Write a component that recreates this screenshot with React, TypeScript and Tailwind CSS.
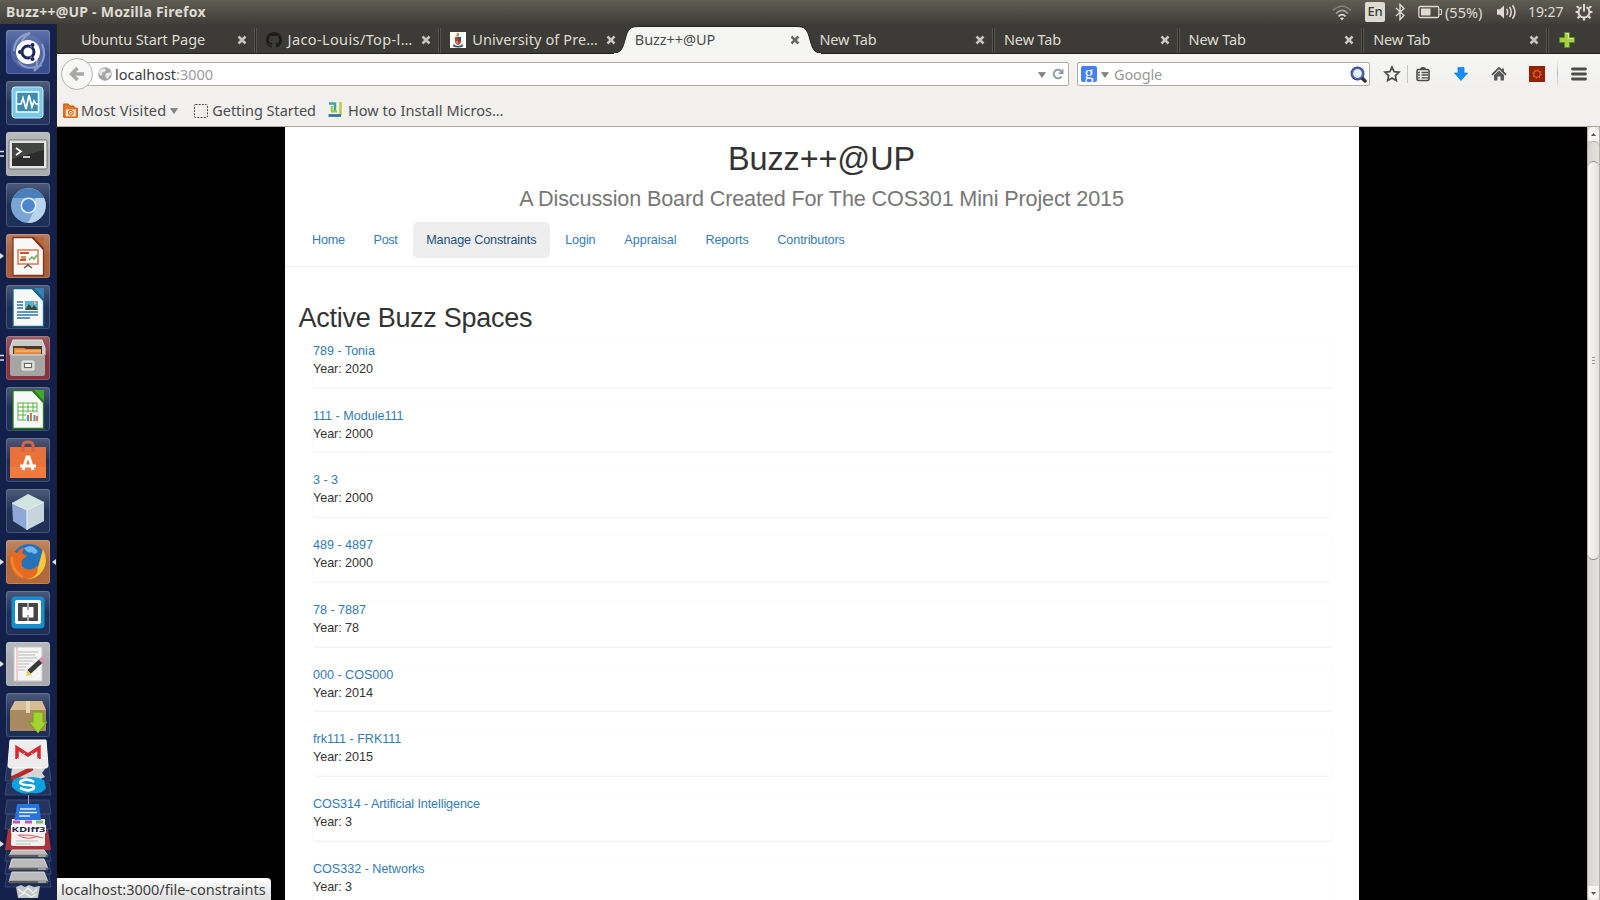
import type { ReactNode } from 'react';

const spaces = [
  ['789 - Tonia', '2020'],
  ['111 - Module111', '2000'],
  ['3 - 3', '2000'],
  ['489 - 4897', '2000'],
  ['78 - 7887', '78'],
  ['000 - COS000', '2014'],
  ['frk111 - FRK111', '2015'],
  ['COS314 - Artificial Intelligence', '3'],
  ['COS332 - Networks', '3'],
];

function Svg({ w, h, className = '', children }: { w: number; h: number; className?: string; children: ReactNode }) {
  return (
    <svg width={w} height={h} viewBox={`0 0 ${w} ${h}`} className={`block shrink-0 ${className}`} fill="none">
      {children}
    </svg>
  );
}

function TitleBar() {
  return (
    <header className="flex h-6 shrink-0 items-center bg-linear-to-b from-[#5f5c52] to-[#3f3e39] pl-1.5 text-[#dfdbd2]">
      <span className="text-[14px] leading-6 font-bold tracking-[0.24px]">Buzz++@UP - Mozilla Firefox</span>
      <div className="ml-auto flex items-center">
        <Svg w={20} h={20} className="mr-[13px]">
          <path d="M1 8.500Q10 0 19 8.500" stroke="#85827b" strokeWidth="1.600" />
          <path d="M4 11.500Q10 5.500 16 11.500" stroke="#a5a29a" strokeWidth="1.700" />
          <path d="M6.500 14.300Q10 11 13.500 14.300" stroke="#dfdbd2" strokeWidth="1.700" />
          <path d="M8 16.200L10 18.600L12 16.200Q10 14.800 8 16.200Z" fill="#dfdbd2" />
        </Svg>
        <span className="flex h-5 w-5 items-center justify-center rounded-[2px] bg-[#dfdbd2] text-[13px] font-medium tracking-[-0.3px] text-[#3c3b37]">En</span>
        <Svg w={12} h={18} className="ml-[9px]">
          <path d="M2 5L10 12.500L6 16.500V1.500L10 5.500L2 13" stroke="#dfdbd2" strokeWidth="1.400" />
        </Svg>
        <Svg w={25} h={14} className="ml-[12px]">
          <rect x=".8" y="1.500" width="20" height="11" rx="1.500" stroke="#dfdbd2" strokeWidth="1.300" />
          <rect x="3" y="3.500" width="9.500" height="7" fill="#dfdbd2" />
          <path d="M21.500 4.500H23.500V9.500H21.500" stroke="#dfdbd2" />
        </Svg>
        <span className="ml-[2px] w-[40px] pb-[1px] text-[14.5px] leading-5 whitespace-nowrap">(55%)</span>
        <Svg w={22} h={18} className="ml-[11px]">
          <path d="M1 6.200H4L8 2.500V15.500L4 11.800H1Z" fill="#dfdbd2" />
          <path d="M10.500 6Q13 9 10.500 12M13.500 4Q17 9 13.500 14M16.500 2.200Q21.500 9 16.500 15.800" stroke="#dfdbd2" strokeWidth="1.500" />
        </Svg>
        <span className="ml-[10px] w-[36px] pb-[1px] text-[14px] leading-5 tracking-[-0.1px]">19:27</span>
        <Svg w={18} h={18} className="mr-[7px] ml-[11px]">
          <path d="M6.500 4.200A5.500 5.500 0 1 0 11.500 4.200" stroke="#dfdbd2" strokeWidth="2" />
          <path d="M9 1V8.500" stroke="#dfdbd2" strokeWidth="2" />
          <path d="M3.800 5L1.800 3.200M14.200 5L16.200 3.200M3.400 9H.6M14.600 9H17.400M4.600 13.200L2.600 15.200M13.400 13.200L15.400 15.200M9 15V17.600" stroke="#dfdbd2" strokeWidth="2.200" />
        </Svg>
      </div>
    </header>
  );
}

function Crest() {
  return (
    <Svg w={16} h={16} className="bg-white">
      <path d="M5 5H11V9Q11 12 8 13Q5 12 5 9Z" fill="#b4432f" />
      <path d="M8 5H11V9H8Z" fill="#3c4d86" />
      <path d="M6 9H8V12.500Q6 11.500 6 9Z" fill="#d5a02c" />
      <path d="M7 1H9V4.500H6Z" fill="#b79a45" />
      <path d="M3 13.500Q8 16 13 13.500" stroke="#2d477e" strokeWidth="1.500" />
      <path d="M4.500 12L3 14M11.500 12L13 14" stroke="#6c8c4e" />
    </Svg>
  );
}

function GitHub() {
  return (
    <svg width="16" height="16" viewBox="0 0 16 16" fill="#1d1c1a" className="block shrink-0">
      <path d="M8 0C3.58 0 0 3.58 0 8c0 3.54 2.29 6.53 5.47 7.59.4.07.55-.17.55-.38 0-.19-.01-.82-.01-1.49-2.01.37-2.53-.49-2.69-.94-.09-.23-.48-.94-.82-1.13-.28-.15-.68-.52-.01-.53.63-.01 1.08.58 1.23.82.72 1.21 1.87.87 2.33.66.07-.52.28-.87.51-1.07-1.78-.2-3.64-.89-3.64-3.95 0-.87.31-1.59.82-2.15-.08-.2-.36-1.02.08-2.12 0 0 .67-.21 2.2.82.64-.18 1.32-.27 2-.27s1.36.09 2 .27c1.53-1.04 2.2-.82 2.2-.82.44 1.1.16 1.92.08 2.12.51.56.82 1.27.82 2.15 0 3.07-1.87 3.75-3.65 3.95.29.25.54.73.54 1.48 0 1.07-.01 1.93-.01 2.2 0 .21.15.46.55.38A8.01 8.01 0 0 0 16 8c0-4.42-3.58-8-8-8z" />
    </svg>
  );
}

function Tab({ title, icon, active = false, last = false, tracking = 'tracking-[-0.05px]' }: { title: string; icon?: ReactNode; active?: boolean; last?: boolean; tracking?: string }) {
  return (
    <div className="relative flex w-[184.6px] shrink-0 items-center pt-[2px] pr-[10px] pl-[9px]">
      {active && (
        <svg width="213" height="29" viewBox="0 0 213 29" className="absolute top-px left-[-14px]">
          <path d="M0 28.500C10 28.500 11 22 13.500 13C16 4 18 1.500 27 1.500H184C193 1.500 195 4 197.500 13C200 22 201 28.500 211 28.500Z" fill="#f5f5f4" stroke="#22211f" strokeWidth="1" />
          <path d="M2 28.700H209" stroke="#f5f5f4" strokeWidth="1.500" />
        </svg>
      )}
      {icon}
      <span className={`relative text-[14.5px] whitespace-nowrap ${icon ? 'ml-[6px]' : ''} ${tracking} ${active ? 'text-[#4c4c4c]' : 'text-[#dfdbd2]'}`}>{title}</span>
      <Svg w={10} h={10} className="relative ml-auto">
        <path d="M1.500 1.500L8.500 8.500M8.500 1.500L1.500 8.500" stroke={active ? '#6a6864' : '#c9c5bd'} strokeWidth="2.500" />
      </Svg>
      {!active && !last && <span className="absolute top-1 right-0 h-[25px] w-[3px] border-x border-[#55534e] bg-[#2c2b28]" />}
    </div>
  );
}

function TabStrip() {
  return (
    <div className="flex h-[30px] shrink-0 border-b border-[#22211f] bg-[#3c3b37] pl-[15px]">
      <Tab title="Ubuntu Start Page" tracking="tracking-[-0.1px]" />
      <Tab title="Jaco-Louis/Top-l…" icon={<GitHub />} tracking="tracking-[0.38px]" />
      <Tab title="University of Pre…" icon={<Crest />} last tracking="tracking-[0.12px]" />
      <Tab title="Buzz++@UP" active />
      <Tab title="New Tab" tracking="tracking-[-0.12px]" />
      <Tab title="New Tab" tracking="tracking-[-0.12px]" />
      <Tab title="New Tab" tracking="tracking-[-0.12px]" />
      <Tab title="New Tab" tracking="tracking-[-0.12px]" />
      <Svg w={18} h={18} className="mt-[7px] ml-[9px]">
        <path d="M6.500 1.500H11.500V6.500H16.500V11.500H11.500V16.500H6.500V11.500H1.500V6.500H6.500Z" fill="#a9cf46" stroke="#5d8a1c" />
        <path d="M7.500 2.500H10.500V7.500H15.500" stroke="#d8ec94" />
      </Svg>
    </div>
  );
}

function Caret() {
  return (
    <Svg w={8} h={6}>
      <path d="M.5 .5H7.500L4 5.500Z" fill="#858585" stroke="#6f6f6f" strokeWidth=".6" />
    </Svg>
  );
}

function NavBar() {
  return (
    <div className="flex h-10 shrink-0 items-center pl-1">
      <div className="relative z-10 flex h-8 w-8 shrink-0 items-center justify-center rounded-full border border-[#b3b7ba] bg-[#f7f7f6]">
        <Svg w={16} h={16}>
          <path d="M8.500 2L2.500 8L8.500 14M3 8H15" stroke="#a9a8a6" strokeWidth="3.400" />
        </Svg>
      </div>
      <div className="-ml-2 flex h-6 w-[984px] shrink-0 items-center rounded-[2px] border border-[#b1ada6] bg-white pr-[4px] pl-[12px] text-[14.5px]">
        <Svg w={14} h={14}>
          <circle cx="7" cy="7" r="6.800" fill="#a6a6a6" />
          <path d="M2 3Q4 1 7 1.500L8 3.500L6 5L4 5.500L4.500 8L2.500 8.500L.8 6ZM8.500 6L12.500 5.500L13.300 7.500L11 9.500L10 12L8 10.500L7 8Z" fill="#e9e9e9" />
        </Svg>
        <span className="ml-[3px] pt-[1px] tracking-[-0.02px] text-[#3c3c3c]">localhost<span className="text-[#9b9b9b]">:3000</span></span>
        <div className="mr-[6px] ml-auto pt-[2px]"><Caret /></div>
        <Svg w={12} h={12}>
          <path d="M9.500 8.500A4.300 4.300 0 1 1 8.500 2.500L9.500 3.500" stroke="#8d99a3" strokeWidth="2" />
          <path d="M11.500 .5V6H6Z" fill="#8d99a3" />
        </Svg>
      </div>
      <div className="ml-2 flex h-6 w-[293px] shrink-0 items-center rounded-[2px] border border-[#b1ada6] bg-white pr-[2px] pl-[3px] text-[14.5px]">
        <span className="flex h-4 w-4 items-center justify-center rounded-[2px] bg-[#4580f5] pb-[3px] font-['Liberation_Serif',serif] text-[18px] leading-none text-white">g</span>
        <div className="ml-1 pt-[2px]"><Caret /></div>
        <span className="ml-[5px] pt-[1px] tracking-[-0.15px] text-[#999]">Google</span>
        <Svg w={17} h={17} className="ml-auto">
          <path d="M11 11L15 15" stroke="#333" strokeWidth="3.500" strokeLinecap="round" />
          <circle cx="7.500" cy="7.500" r="5.700" fill="#e5edf9" stroke="#2b3e8c" strokeWidth="2.500" />
          <circle cx="7.500" cy="7.500" r="5.500" stroke="#8195d3" strokeWidth=".7" />
        </Svg>
      </div>
      <Svg w={18} h={18} className="ml-[13px]">
        <path d="M9 2L11.100 6.600L16 7.200L12.400 10.600L13.300 15.600L9 13.100L4.700 15.600L5.600 10.600L2 7.200L6.900 6.600Z" stroke="#4c4c4c" strokeWidth="1.700" />
      </Svg>
      <span className="ml-[6px] h-[18px] w-px bg-[#c4c8cc]" />
      <Svg w={16} h={16} className="ml-[7px]">
        <rect x="2" y="3.500" width="12" height="11" rx="1.500" stroke="#4c4c4c" strokeWidth="1.600" />
        <path d="M5 3.500Q5 1 8 1Q11 1 11 3.500Z" fill="#4c4c4c" />
        <path d="M3 6.500H5M6.500 6.500H13M3 9H5M6.500 9H13M3 11.800H5M6.500 11.800H13" stroke="#4c4c4c" strokeWidth="1.300" />
      </Svg>
      <Svg w={16} h={16} className="ml-[22px]">
        <path d="M5 1.500H11V7H14.500L8 14.500L1.500 7H5Z" fill="#168ffb" stroke="#0a7be0" strokeWidth=".7" />
      </Svg>
      <Svg w={16} h={16} className="ml-[22px]">
        <path d="M1 8.800L8 2L15 8.800" stroke="#4c4c4c" strokeWidth="1.700" />
        <path d="M3 9L8 4.500L13 9V14.500H9.500V10.500H6.500V14.500H3Z" fill="#5b5b5b" />
        <path d="M12 2.500V6" stroke="#4c4c4c" strokeWidth="1.700" />
      </Svg>
      <Svg w={16} h={16} className="ml-[22px]">
        <rect width="16" height="16" fill="#952100" />
        <circle cx="8" cy="8" r="3.200" stroke="#d4701a" strokeWidth="1.100" />
        <circle cx="8" cy="8" r="4.300" stroke="#d4701a" strokeWidth="1.200" strokeDasharray="1 2.380" />
      </Svg>
      <span className="ml-[12px] h-8 w-px bg-linear-to-b from-transparent via-[#b5bcc4] to-transparent" />
      <Svg w={16} h={14} className="ml-[13px]">
        <path d="M1.500 2H14.500M1.500 7H14.500M1.500 12H14.500" stroke="#4c4c4c" strokeWidth="2.800" strokeLinecap="round" />
      </Svg>
    </div>
  );
}

function BookmarksBar() {
  return (
    <div className="flex h-[33px] shrink-0 items-center border-b border-[#aca79f] pt-[1px] pl-[6px] text-[14.5px] whitespace-nowrap text-[#4c4c4c]">
      <Svg w={15} h={15}>
        <path d="M.7 14.300V1H5.500L7 3H11V5H14.300V14.300Z" fill="#e07b2a" stroke="#c8590f" />
        <rect x="2.800" y="6.500" width="10" height="6.800" fill="#f7dcc4" />
        <circle cx="7.800" cy="9.800" r="2.400" stroke="#c8590f" />
        <circle cx="7.800" cy="9.800" r=".8" fill="#c8590f" />
      </Svg>
      <span className="mr-[4px] ml-[3px] tracking-[0.16px]">Most Visited</span>
      <Caret />
      <Svg w={14} h={14} className="ml-[16px]">
        <rect x=".5" y=".5" width="13" height="13" rx="1" stroke="#4c4c4c" strokeDasharray="2 1.200" />
      </Svg>
      <span className="ml-[4px] tracking-[-0.04px]">Getting Started</span>
      <Svg w={14} h={15} className="-mt-[2px] ml-[12px]">
        <path d="M1 1.500H7V10" stroke="#3ea6a4" strokeWidth="2.500" />
        <path d="M12.500 0V13" stroke="#b9cf31" strokeWidth="2.500" />
        <path d="M3.800 4V9.500H9" stroke="#9dc63a" strokeWidth="2" />
        <path d="M.5 13.500H13" stroke="#3475a5" strokeWidth="2.800" />
      </Svg>
      <span className="ml-[6px] tracking-[0.06px]">How to Install Micros…</span>
    </div>
  );
}

const navLink = 'rounded-[5px] px-[13.5px] py-[9px]';

function Page() {
  return (
    <main className="h-full w-[1074px] shrink-0 overflow-hidden bg-white font-['Liberation_Sans',Arial,sans-serif] text-[12.6px] leading-[18px] text-[#333]">
      <div className="h-[140px] border-b border-[#eee] pt-[14px]">
        <h1 className="pr-[1px] text-center text-[32.4px] leading-[36px] tracking-[-0.08px]">Buzz++@UP</h1>
        <p className="mt-[8px] pr-[1px] text-center text-[21.6px] leading-[28px] tracking-[-0.14px] text-[#777]">A Discussion Board Created For The COS301 Mini Project 2015</p>
        <nav className="mt-[9px] flex gap-[1.8px] pl-[13.5px] text-[#337ab7]">
          <a className={`${navLink} tracking-[-0.2px]`}>Home</a>
          <a className={`${navLink} tracking-[-0.35px]`}>Post</a>
          <a className={`${navLink} bg-[#eee] tracking-[-0.14px] text-[#23527c]`}>Manage Constraints</a>
          <a className={`${navLink} tracking-[-0.1px]`}>Login</a>
          <a className={`${navLink} tracking-[-0.02px]`}>Appraisal</a>
          <a className={`${navLink} tracking-[-0.14px]`}>Reports</a>
          <a className={`${navLink} tracking-[-0.1px]`}>Contributors</a>
        </nav>
      </div>
      <h2 className="mt-[36px] pl-[13.5px] text-[27px] leading-[30px] tracking-[-0.27px]">Active Buzz Spaces</h2>
      <ul className="mt-[8.100px] flex flex-col gap-[18px] px-[26.5px]">
        {spaces.map(([name, year]) => (
          <li key={name} className="h-[46.700px] shrink-0 rounded-[4px] border border-[#fcfcfc] pl-[0.5px] shadow-[0_1px_1px_rgba(0,0,0,0.05)]">
            <a className={`block text-[#337ab7] ${name.length > 20 ? 'tracking-[-0.1px]' : 'tracking-[-0.02px]'}`}>{name}</a>
            <p className="tracking-[-0.06px]">Year: {year}</p>
          </li>
        ))}
      </ul>
    </main>
  );
}

function ScrollBar() {
  return (
    <div className="flex w-[13px] shrink-0 flex-col border-x border-[#b5b1ab] bg-linear-to-r from-[#d8d6d3] to-[#e4e2df]">
      <div className="flex h-[14px] items-center justify-center rounded-t-[6px] bg-[#f7f6f5]">
        <Svg w={5} h={3}><path d="M0 3H5L2.500 0Z" fill="#555" /></Svg>
      </div>
      <div className="h-[20px] shrink-0 rounded-t-[6px] border-t border-[#b5b1ab]" />
      <div className="flex h-[399px] flex-col items-center justify-center gap-[2px] rounded-[6px] border-y border-[#8c8881] bg-linear-to-r from-[#fbfaf9] to-[#e2e0dd]">
        <span className="h-px w-[3px] bg-[#999]" />
        <span className="h-px w-[3px] bg-[#999]" />
        <span className="h-px w-[3px] bg-[#999]" />
      </div>
      <div className="mt-auto flex h-[14px] items-center justify-center rounded-b-[6px] bg-[#f7f6f5]">
        <Svg w={5} h={3}><path d="M0 0H5L2.500 3Z" fill="#555" /></Svg>
      </div>
    </div>
  );
}

function Doc({ color, dark, children }: { color: string; dark: string; children: ReactNode }) {
  return (
    <>
      <path d="M7 3.500H27L37.500 14V41.500H7Z" fill="#f8f8f8" stroke={dark} strokeWidth="1.300" />
      <path d="M25 3H38V17Z" fill={color} />
      <path d="M25 3L38 17V14L28 3Z" fill={dark} />
      {children}
    </>
  );
}

const launcherItems: { bg: string; mark?: 'one' | 'two' | 'focus'; art: ReactNode }[] = [
  {
    bg: 'bg-[#3a4f92]',
    art: (
      <>
        <circle cx="22" cy="22" r="17" fill="#7084b8" opacity=".45" />
        <path d="M8 21Q9 6 24 3Q13 9 15 22M36 14Q43 30 28 41Q34 31 29 25M12 31Q20 42 36 35" stroke="#a6b4d6" strokeWidth="2" opacity=".7" />
        <circle cx="22" cy="22" r="12" fill="#fff" />
        <circle cx="22" cy="22" r="6" stroke="#19275e" strokeWidth="3" />
        <path d="M16 22H10M25 17L28 12M25 27L28 32" stroke="#fff" strokeWidth="2" />
        <circle cx="14" cy="22" r="2" fill="#19275e" /><circle cx="26.500" cy="15" r="2" fill="#19275e" /><circle cx="26.500" cy="29" r="2" fill="#19275e" />
      </>
    ),
  },
  {
    bg: 'bg-[#24345c]',
    art: (
      <>
        <rect x="6" y="6" width="31" height="31" rx="3" fill="#79c9e8" stroke="#c9eefa" />
        <rect x="10.500" y="11" width="22" height="20" fill="#3d8bad" stroke="#e9f7fb" strokeWidth="1.600" />
        <path d="M11 23H15L17 17L20 28L23 14L26 26L28 20L30 23H32" stroke="#fff" strokeWidth="1.700" />
      </>
    ),
  },
  {
    bg: 'bg-[#a9abad]',
    mark: 'two',
    art: (
      <>
        <rect x="3" y="8" width="38" height="29" rx="1.500" fill="#e4e4e2" stroke="#707070" />
        <rect x="6" y="11" width="32" height="23" fill="#2c2d2c" />
        <path d="M6 11H38V18L6 27Z" fill="#434543" />
        <path d="M10 16L15 19.500L10 23M17 25H24" stroke="#fff" strokeWidth="1.700" />
      </>
    ),
  },
  {
    bg: 'bg-[#1f3058]',
    art: (
      <>
        <circle cx="22.500" cy="22.500" r="17.500" fill="#7ba5d4" />
        <path d="M7 15A17.500 17.500 0 0 1 38 15H22Z" fill="#4a7fb9" />
        <path d="M38 15A17.500 17.500 0 0 1 22 40L29 26L29 15Z" fill="#b9d5ee" />
        <circle cx="22.500" cy="22.500" r="8" fill="#e4f0fb" /><circle cx="22.500" cy="22.500" r="6.400" fill="#4b86cf" />
      </>
    ),
  },
  {
    bg: 'bg-[#a65f3a]',
    mark: 'one',
    art: (
      <Doc color="#b9683c" dark="#7e3718">
        <rect x="12" y="16" width="20" height="14" fill="#fff" stroke="#d4774d" strokeWidth="1.500" />
        <path d="M14 19H23M14 26H20" stroke="#c9572a" strokeWidth="2" /><rect x="15" y="22" width="5" height="3" fill="#dd8f60" />
        <path d="M23 26L26 23L28 25L31 21" stroke="#65ab4b" strokeWidth="1.500" />
        <path d="M22 30V31L18 34M22 31L26 34" stroke="#555" strokeWidth="1.500" />
      </Doc>
    ),
  },
  {
    bg: 'bg-[#1f3058]',
    art: (
      <Doc color="#3284b5" dark="#17618f">
        <rect x="19" y="16" width="13" height="9" fill="#5daed8" /><path d="M19 25L23 19L26 23L28 20L32 25Z" fill="#35502b" />
        <circle cx="29" cy="18" r="1.200" fill="#f3d34b" />
        <path d="M11 17H17M11 20H17M11 23H17M11 27H32M11 30H32M11 33H24" stroke="#2d76ab" strokeWidth="1.500" />
      </Doc>
    ),
  },
  {
    bg: 'bg-[#83343f]',
    mark: 'two',
    art: (
      <>
        <path d="M7 4H36L39 12V19H4V12Z" fill="#c8c8c5" stroke="#e5e5e3" />
        <rect x="7" y="10" width="29" height="9" fill="#4c3b2c" />
        <path d="M8 12H18L20 13H35V19H8Z" fill="#e58b3b" /><path d="M9 15H35" stroke="#ffc789" />
        <path d="M4 18H39V38Q39 40 37 40H6Q4 40 4 38Z" fill="#a5a5a2" /><path d="M5 19H38" stroke="#dededb" />
        <rect x="16" y="25" width="12" height="9" rx="1" fill="#d0d0cd" stroke="#eee" /><rect x="18.500" y="27.500" width="7" height="4" fill="#f4f4f4" stroke="#666" />
      </>
    ),
  },
  {
    bg: 'bg-[#1f3058]',
    art: (
      <Doc color="#42a829" dark="#267b17">
        <rect x="12" y="16" width="19" height="17" fill="#fff" stroke="#58ae42" />
        <path d="M12 20H31M12 24H31M12 28H31M17 16V33M22 16V33M27 16V33" stroke="#58ae42" />
        <rect x="20" y="25" width="12" height="9" fill="#f5f5f5" stroke="#bbb" strokeWidth=".5" />
        <path d="M22 34V28M28.500 34V28" stroke="#4d99cc" strokeWidth="2" /><path d="M25 34V26M31 34V29" stroke="#e07b2f" strokeWidth="2" />
      </Doc>
    ),
  },
  {
    bg: 'bg-[#222f55]',
    art: (
      <>
        <path d="M4 9H40V40H4Z" fill="#e9723a" /><path d="M4 29H40V40H4Z" fill="#f07b3d" />
        <path d="M17 14V7Q17 4 22 4Q27 4 27 7V14" stroke="#d0664b" strokeWidth="3" />
        <path d="M17 32L21 19H23L27 32M14 28H30" stroke="#fff" strokeWidth="3" />
      </>
    ),
  },
  {
    bg: 'bg-[#223256]',
    art: (
      <>
        <path d="M6 14L22 5L38 13L21 21Z" fill="#d1e4df" /><path d="M6 14L21 21V41L7 32Z" fill="#8fa8d8" /><path d="M21 21L38 13V32L21 41Z" fill="#c6d4de" />
        <path d="M6 14L21 21L38 13M21 21V41" stroke="#edf5f7" />
      </>
    ),
  },
  {
    bg: 'bg-[#b06a3e]',
    mark: 'focus',
    art: (
      <>
        <circle cx="23" cy="21" r="17" fill="#2672ba" /><path d="M18 8Q27 3 32 12Q27 16 26 12Q22 14 18 8Z" fill="#70b9e7" />
        <path d="M37 9Q44 24 34 34Q28 40 20 39Q32 32 34 20Z" fill="#fbc638" />
        <path d="M5 10L11 13Q14 8 18 8L16 13L21 16L16 20Q14 27 20 29Q26 31 31 26Q34 33 26 38Q12 42 6 30Q2 20 5 10Z" fill="#e66a22" />
        <path d="M6 17Q5 30 17 37" stroke="#f58a2e" strokeWidth="2" />
      </>
    ),
  },
  {
    bg: 'bg-[#1f3058]',
    art: (
      <>
        <rect x="5.500" y="5.500" width="33" height="32" rx="4" fill="#168fd0" /><rect x="9" y="9" width="26" height="24" rx="2" fill="#fff" />
        <rect x="12" y="12" width="20" height="18" fill="#464646" /><path d="M16.500 16H21V18.500H23V16H27.500V26.500H23V24H21V26.500H16.500Z" fill="#fff" /><path d="M22 12V18M22 24V30" stroke="#fff" strokeWidth="1" />
      </>
    ),
  },
  {
    bg: 'bg-[#a9aaae]',
    mark: 'one',
    art: (
      <>
        <rect x="8" y="5" width="28" height="34" fill="#f5f5f5" stroke="#c7c7c7" />
        <path d="M12 10H32M12 13H29M12 16H31M12 19H27M12 22H23M12 25H20M12 28H19" stroke="#a7a7a7" strokeWidth=".8" /><path d="M11 5V39" stroke="#eda6a6" />
        <path d="M23 30L36 18" stroke="#393939" strokeWidth="5" /><path d="M34.500 19.500L38 16" stroke="#d691b3" strokeWidth="5" /><path d="M20 34L21 28L26 33Z" fill="#e2d25c" />
      </>
    ),
  },
  {
    bg: 'bg-[#1f3058]',
    art: (
      <>
        <path d="M9 8H36L40 18V38H4V18Z" fill="#c5a77c" /><path d="M4 17H40V38H4Z" fill="#a88a61" /><path d="M9 8H36L40 17H4Z" fill="#d7bd95" /><rect x="20" y="8" width="4" height="12" fill="#e6d6b8" />
        <path d="M27 19H37V29H41L32 40L23 29H27Z" fill="#a3d32e" stroke="#70a01a" />
      </>
    ),
  },
];

function Launcher() {
  return (
    <aside className="flex w-[57px] shrink-0 flex-col overflow-hidden border-r border-[#27211f] bg-[#12204a]">
      <div className="flex flex-col gap-[7px] pt-[6px]">
        {launcherItems.map((item, i) => (
          <div key={i} className="relative flex h-11 shrink-0 justify-center">
            <div className={`h-11 w-11 rounded-[3px] bg-linear-to-b from-white/20 to-transparent to-50% shadow-[inset_0_0_0_1px_rgba(255,255,255,0.17)] ${item.bg}`}>
              <Svg w={44} h={44}>{item.art}</Svg>
            </div>
            {(item.mark === 'one' || item.mark === 'focus') && <Svg w={4} h={6} className="absolute top-[19px] left-0"><path d="M0 0L4 3L0 6Z" fill="#ddd" /></Svg>}
            {item.mark === 'two' && <Svg w={4} h={8} className="absolute top-[18px] left-0"><path d="M0 1.500H4M0 6H4" stroke="#ddd" strokeWidth="1.500" /></Svg>}
            {item.mark === 'focus' && <Svg w={4} h={6} className="absolute top-[19px] right-0"><path d="M4 0L0 3L4 6Z" fill="#ddd" /></Svg>}
          </div>
        ))}
      </div>
      <Svg w={56} h={163}>
        <path d="M7 29H49L51 44H5ZM7 46H49L51 58H5ZM7 63H49L51 77H5ZM7 77H49L51 92H5Z" fill="#24345e" stroke="#3a4a72" />
        <path d="M7 112H49L51 124H5ZM7 124H49L51 137H5ZM7 137H49L51 150H5Z" fill="#1c2b55" stroke="#33436c" />
        <path d="M12 31L17 28L24 30L28 28L35 30L42 28L45 32L42 36L45 40L36 44H15L11 38Z" fill="#d5d5d3" />
        <path d="M13 41L31 32" stroke="#b82928" strokeWidth="4.500" strokeLinecap="round" />
        <path d="M12 45Q14 39 25 41Q35 38 44 43L46 51Q42 58 31 56Q20 59 12 50Z" fill="#0ca0df" />
        <path d="M34 45Q28 41 21 44Q18 47 26 48Q37 48 33 52Q28 55 20 51" stroke="#fff" strokeWidth="2.700" />
        <path d="M10 3H46L48 28Q48 31 46 31H10Q8 31 8 28Z" fill="#ececec" stroke="#fff" />
        <path d="M17 22V11L28 18L39 11V22" stroke="#d5292d" strokeWidth="3.500" /><path d="M17 22L25 16M39 22L31 16" stroke="#ddd" />
        <path d="M28.500 58V68" stroke="#9ba6bd" />
        <path d="M8 92H48L51 113H5Z" fill="#ad343d" />
        <path d="M12 82H45V107Q45 109 43 109H13Q11 109 11 107Z" fill="#f2f2f0" />
        <path d="M13 85H20M25 85H32" stroke="#bd59b4" strokeWidth="3" /><path d="M36 85H43" stroke="#7eb973" strokeWidth="3" />
        <path d="M17 67H39L41 83H14.500Z" fill="#2874dd" /><path d="M20 72H36M19 75.500H37M19 79H30" stroke="#dcebff" strokeWidth="1.500" />
        <path d="M18 98Q27 104 38 99M19 98Q30 97 43 101" stroke="#e25757" />
        <path d="M16 104H38M16 107H31" stroke="#bbb" />
        <rect x="11" y="88" width="35" height="8" fill="#fff" />
        <path d="M12 113H44L48 119H9ZM12 122H44L48 132H9ZM12 135H44L48 145H9Z" fill="#bbb" stroke="#d9d9d9" />
        <path d="M9 119H48M9 132H48M9 145H48" stroke="#5d5d5d" strokeWidth="2.500" /><path d="M38 119H46M38 132H46M38 145H46" stroke="#ddd" />
        <path d="M16 150L21 148L25 150L29 148L34 150L40 149L38 161H18Z" fill="#c4c7c8" />
        <path d="M18 152L23 156L28 151L33 156L37 152M19 159L25 156L31 160L37 157" stroke="#f0f0f0" strokeWidth="1.300" />
        <path d="M0 104L4 107L0 110Z" fill="#ddd" />
        <text x="11.500" y="95" textLength="34" lengthAdjust="spacingAndGlyphs" fill="#26264b" fontSize="7.500" fontWeight="bold">KDiff3</text>
      </Svg>
    </aside>
  );
}

export default function App() {
  return (
    <div className="flex h-[900px] w-[1600px] flex-col overflow-hidden bg-black font-['Noto_Sans','Open_Sans',sans-serif]">
      <TitleBar />
      <div className="flex min-h-0 flex-1">
        <Launcher />
        <div className="relative flex min-w-0 flex-1 flex-col">
          <TabStrip />
          <div className="flex shrink-0 flex-col bg-linear-to-b from-[#f6f6f5] to-[#f1f0ee] to-50%">
            <NavBar />
            <BookmarksBar />
          </div>
          <div className="flex min-h-0 flex-1 justify-between bg-black pl-[228px]">
            <Page />
            <ScrollBar />
          </div>
          <div className="absolute bottom-0 left-0 flex h-[22px] w-[214px] items-center rounded-tr-[4px] bg-linear-to-b from-white to-[#dedede] pt-[2px] pl-[4px] text-[14.5px] whitespace-nowrap text-[#3c3c3c]">
            localhost:3000/file-constraints
          </div>
        </div>
      </div>
    </div>
  );
}
